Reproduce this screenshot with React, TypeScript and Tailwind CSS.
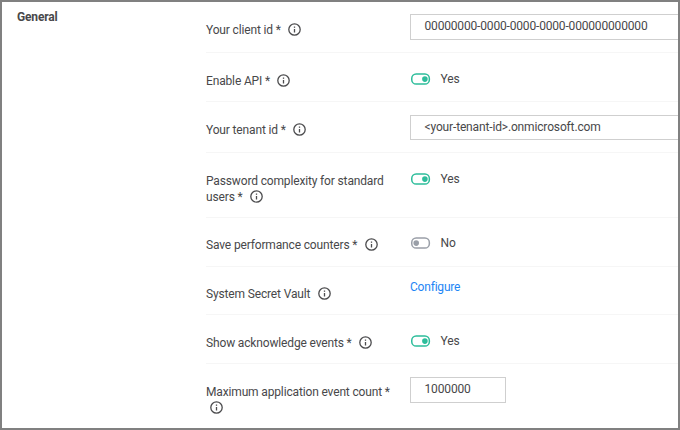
import type { ReactNode } from "react";

function Info({ className = "ml-[5px]" }: { className?: string }) {
  return (
    <svg className={`inline-block size-[14px] shrink-0 align-[-3px] ${className}`} viewBox="0 0 14 14" fill="none">
      <circle cx="6.5" cy="6.5" r="5.7" stroke="#4c4c4e" strokeWidth="1.3" />
      <path d="M6.5 6V9.5" stroke="#4c4c4e" strokeWidth="1.3" />
      <path d="M6.5 3.5V4.8" stroke="#4c4c4e" strokeWidth="1.3" />
    </svg>
  );
}

function Toggle({ on }: { on: boolean }) {
  const color = on ? "#2dbd9b" : "#9a9fa8";
  return (
    <div className="flex h-4 items-center">
      <svg className="ml-px h-[12px] w-[20px] shrink-0" viewBox="0 0 20 12" fill="none">
        <rect x="0.75" y="1.05" width="17.6" height="10" rx="4.4" stroke={color} strokeWidth="1.5" />
        <circle cx={on ? 13.9 : 5.2} cy="6.1" r="2.8" fill={color} />
      </svg>
      <span className="ml-[9.5px]">{on ? "Yes" : "No"}</span>
    </div>
  );
}

interface RowProps {
  label: ReactNode;
  height: string;
  top: string;
  labelTop?: string;
  children: ReactNode;
}

function Row({ label, height, top, labelTop = "pt-5", children }: RowProps) {
  return (
    <div className={`flex shrink-0 border-b border-[#f6f6f6] last:border-b-0 ${height}`}>
      <div className={`w-[204px] shrink-0 ${labelTop}`}>{label}</div>
      <div className={`min-w-0 flex-1 ${top}`}>{children}</div>
    </div>
  );
}

const field = "block border border-[#cfcfcf] bg-white pl-[13.5px] leading-[22px]";

export default function App() {
  return (
    <div className="flex h-[430px] w-[680px] overflow-hidden border-2 border-[#808080] bg-white font-['Roboto',sans-serif] text-[12px] leading-4 tracking-[-0.15px] text-[#48484a]">
      <div className="w-[204px] shrink-0 pt-[7px] pl-[15px] font-bold">General</div>
      <div className="flex min-w-0 flex-1 flex-col">
        <Row height="h-[51px]" top="pt-3" label={<>Your client id * <Info className="ml-1" /></>}>
          <div className={`${field} h-[26px] border-r-0 tracking-[-0.17px]`}>00000000-0000-0000-0000-000000000000</div>
        </Row>
        <Row height="h-[49px]" top="pt-[18px]" label={<>Enable API * <Info className="ml-1" /></>}>
          <Toggle on />
        </Row>
        <Row height="h-[51px]" top="pt-[13px]" label={<>Your tenant id * <Info className="ml-1" /></>}>
          <div className={`${field} h-[25px] border-r-0`}>&lt;your-tenant-id&gt;.onmicrosoft.com</div>
        </Row>
        <Row height="h-[65px]" top="pt-[18px]" label={<>Password complexity for standard<br />users * <Info className="ml-[4.5px]" /></>}>
          <Toggle on />
        </Row>
        <Row height="h-[49px]" top="pt-[17px]" labelTop="pt-[19px]" label={<>Save performance counters * <Info /></>}>
          <Toggle on={false} />
        </Row>
        <Row height="h-[48px]" top="pt-3" labelTop="pt-[19px]" label={<>System Secret Vault <Info /></>}>
          <a className="tracking-[-0.2px] text-[#1e86f5]">Configure</a>
        </Row>
        <Row height="h-[49px]" top="pt-[18px]" label={<>Show acknowledge events * <Info /></>}>
          <Toggle on />
        </Row>
        <Row height="h-[64px]" top="pt-[13px]" label={<>Maximum application event count *<br /><Info className="ml-1" /></>}>
          <div className={`${field} h-[26px] w-24`}>1000000</div>
        </Row>
      </div>
    </div>
  );
}
